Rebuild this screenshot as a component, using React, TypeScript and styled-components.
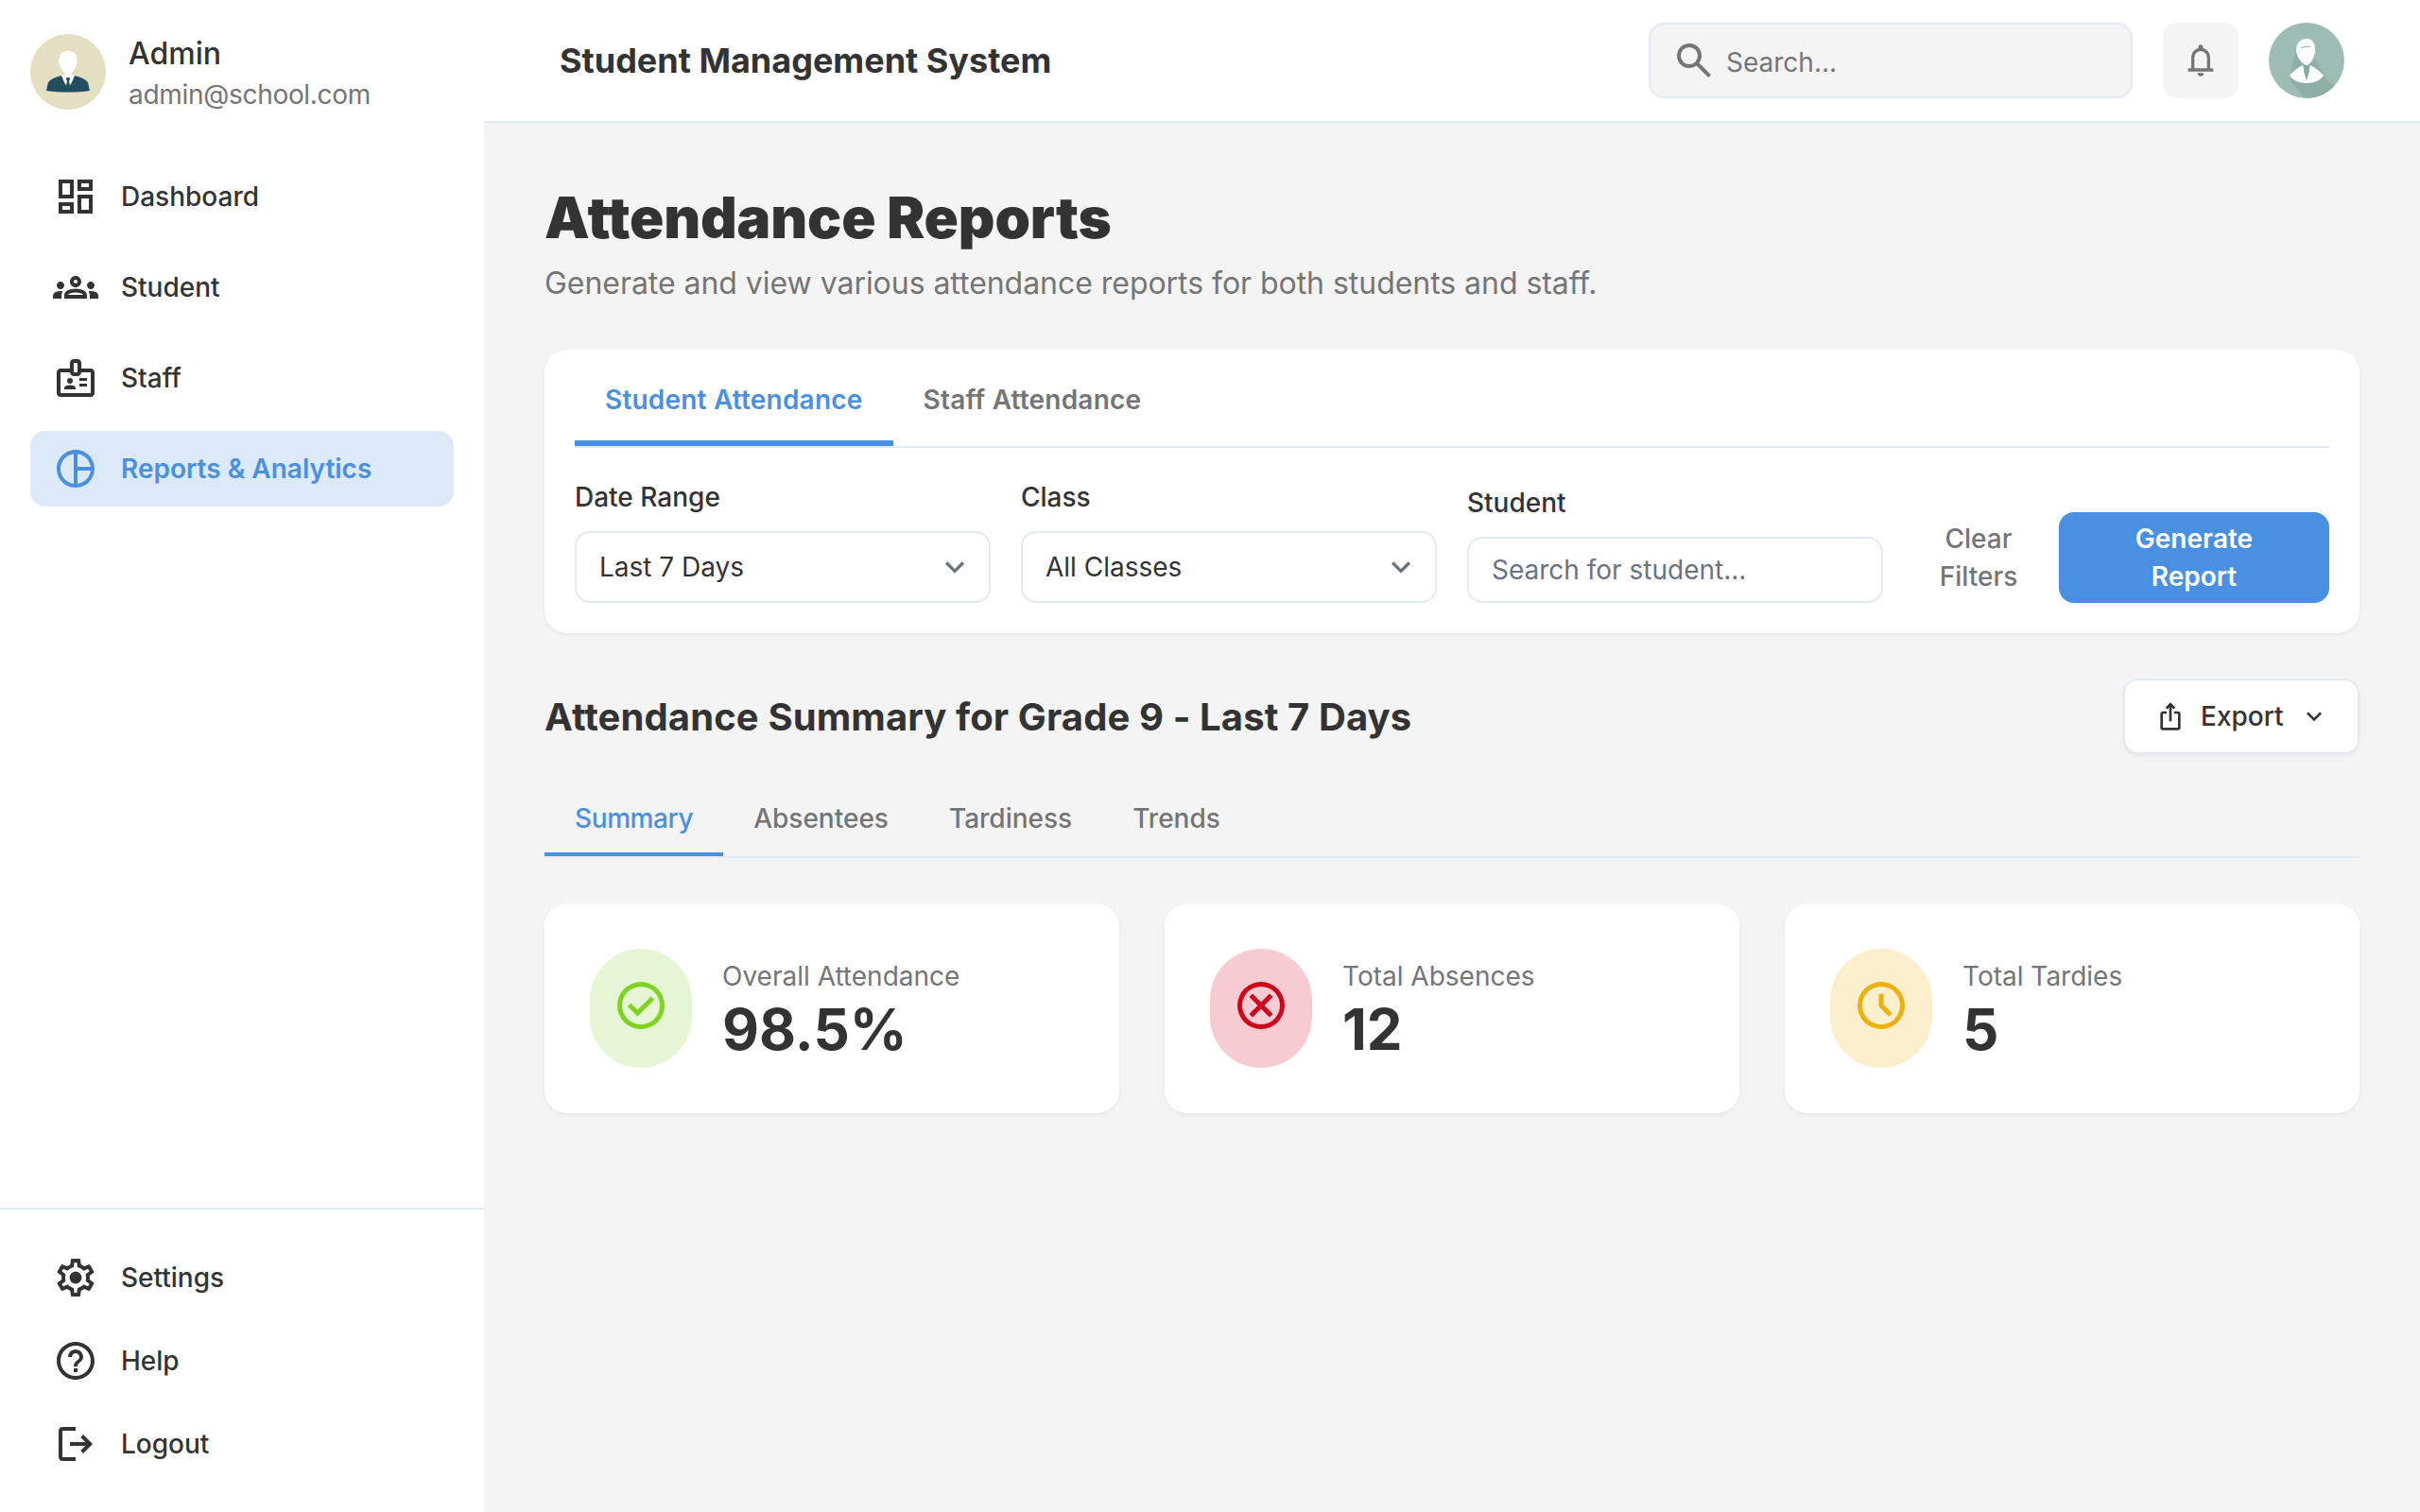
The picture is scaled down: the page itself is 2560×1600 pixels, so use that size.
import { createGlobalStyle, styled } from 'styled-components';
import type { ComponentType } from 'react';
import {
  MdExpandMore,
  MdHelpOutline,
  MdOutlineBadge,
  MdOutlineDashboard,
  MdOutlineGroups,
  MdOutlineIosShare,
  MdOutlinePieChart,
} from 'react-icons/md';

const GlobalStyle = createGlobalStyle`
  * { box-sizing: border-box; }
  html, body { margin: 0; padding: 0; }
  body {
    font-family: Inter, "Noto Sans", sans-serif;
    color: #333333;
    background: #f4f4f4;
  }
`;

const Page = styled.div`
  display: flex;
  width: 2560px;
  height: 1600px;
  overflow: hidden;
`;

const Sidebar = styled.aside`
  width: 512px;
  flex-shrink: 0;
  display: flex;
  flex-direction: column;
  background: #ffffff;
`;

const Profile = styled.div`
  display: flex;
  align-items: center;
  gap: 24px;
  padding: 36px 32px 0;
  height: 116px;
`;

const ProfileText = styled.div`
  display: flex;
  flex-direction: column;
  gap: 5px;
  padding-top: 2px;
`;

const ProfileName = styled.div`
  font-size: 32px;
  line-height: 40px;
  font-weight: 500;
  color: #333333;
`;

const ProfileMail = styled.div`
  font-size: 28px;
  line-height: 36px;
  letter-spacing: -0.3px;
  color: #757575;
`;

const MainNav = styled.nav`
  flex: 1;
  display: flex;
  flex-direction: column;
  gap: 16px;
  padding: 52px 32px 0;
`;

const NavItem = styled.a<{ $active?: boolean }>`
  display: flex;
  align-items: center;
  gap: 24px;
  height: 80px;
  padding: 0 24px;
  border-radius: 16px;
  font-size: 28px;
  font-weight: ${(p) => (p.$active ? 600 : 500)};
  color: ${(p) => (p.$active ? '#4a90e2' : '#333333')};
  background: ${(p) => (p.$active ? 'rgba(74, 144, 226, 0.2)' : 'transparent')};
  svg {
    width: 48px;
    height: 48px;
    flex-shrink: 0;
  }
`;

const BottomNav = styled.nav`
  display: flex;
  flex-direction: column;
  gap: 8px;
  padding: 32px;
  border-top: 2px solid #e5e9f2;
`;

const Content = styled.div`
  flex: 1;
  min-width: 0;
  display: flex;
  flex-direction: column;
`;

const Header = styled.header`
  height: 130px;
  flex-shrink: 0;
  display: flex;
  align-items: center;
  justify-content: space-between;
  padding: 0 80px;
  background: #ffffff;
  border-bottom: 2px solid #e5e9f2;
`;

const AppTitle = styled.h2`
  margin: 0;
  font-size: 36px;
  font-weight: 700;
  color: #333333;
`;

const HeaderTools = styled.div`
  display: flex;
  align-items: center;
  gap: 32px;
`;

const SearchBox = styled.div`
  width: 512px;
  height: 80px;
  display: flex;
  align-items: center;
  gap: 10px;
  padding: 0 24px 0 22px;
  background: #f4f4f4;
  border: 2px solid #e5e9f2;
  border-radius: 16px;
  color: #757575;
  font-size: 28px;
  svg {
    width: 48px;
    height: 48px;
    flex-shrink: 0;
  }
`;

const SearchHint = styled.span`
  padding-top: 3px;
`;

const BellButton = styled.button`
  width: 80px;
  height: 80px;
  display: flex;
  align-items: center;
  justify-content: center;
  padding: 0;
  border: none;
  border-radius: 16px;
  background: #f4f4f4;
  color: #757575;
  svg {
    width: 40px;
    height: 40px;
  }
`;

const Main = styled.main`
  flex: 1;
  display: flex;
  flex-direction: column;
  padding: 64px 64px 0;
`;

const PageTitle = styled.h1`
  margin: 0;
  font-size: 60px;
  line-height: 72px;
  font-weight: 900;
  letter-spacing: -0.14px;
  color: #333333;
`;

const PageSubtitle = styled.p`
  margin: 10px 0 0;
  font-size: 32px;
  line-height: 48px;
  letter-spacing: -0.04px;
  color: #757575;
`;

const FilterCard = styled.section`
  margin-top: 46px;
  padding: 0 32px 32px;
  height: 300px;
  background: #ffffff;
  border-radius: 24px;
  box-shadow: 0 2px 4px rgba(0, 0, 0, 0.05);
`;

const PrimaryTabs = styled.div`
  display: flex;
  height: 104px;
  border-bottom: 2px solid #e5e9f2;
`;

const PrimaryTab = styled.div<{ $active?: boolean }>`
  display: flex;
  align-items: center;
  height: 102px;
  padding: ${(p) => (p.$active ? '9px' : '3px')} 32px 0;
  font-size: 28px;
  font-weight: 600;
  letter-spacing: 0.2px;
  color: ${(p) => (p.$active ? '#4a90e2' : '#757575')};
  border-bottom: ${(p) => (p.$active ? '6px solid #4a90e2' : 'none')};
`;

const FilterRow = styled.div`
  display: flex;
  align-items: flex-end;
  gap: 32px;
  height: 164px;
`;

const Field = styled.div`
  width: 440px;
  display: flex;
  flex-direction: column;
  gap: 16px;
`;

const FieldLabel = styled.label`
  font-size: 28px;
  line-height: 40px;
  font-weight: 500;
  color: #333333;
`;

const SelectBox = styled.div`
  height: 76px;
  display: flex;
  align-items: center;
  justify-content: space-between;
  padding: 0 16px 0 24px;
  border: 2px solid #e5e9f2;
  border-radius: 16px;
  background: #ffffff;
  font-size: 28px;
  color: #333333;
  svg {
    width: 40px;
    height: 40px;
    color: #6b7280;
  }
`;

const StudentInput = styled.div`
  height: 70px;
  display: flex;
  align-items: center;
  padding: 0 24px;
  border: 2px solid #e5e9f2;
  border-radius: 16px;
  background: #ffffff;
  font-size: 28px;
  color: #6b7280;
`;

const FilterActions = styled.div`
  display: flex;
  align-items: center;
  gap: 16px;
  margin-left: auto;
`;

const ClearButton = styled.button`
  width: 108px;
  margin-right: 15px;
  padding: 0;
  border: none;
  background: none;
  font-family: inherit;
  font-size: 28px;
  line-height: 40px;
  font-weight: 500;
  color: #757575;
`;

const GenerateButton = styled.button`
  width: 286px;
  height: 96px;
  padding: 0 40px;
  border: none;
  border-radius: 16px;
  background: #4a90e2;
  font-family: inherit;
  font-size: 28px;
  line-height: 40px;
  font-weight: 600;
  color: #ffffff;
  box-shadow: 0 2px 4px rgba(0, 0, 0, 0.06);
`;

const SummaryHead = styled.div`
  margin-top: 48px;
  display: flex;
  align-items: center;
  justify-content: space-between;
`;

const SummaryTitle = styled.h3`
  margin: 0;
  font-size: 40px;
  font-weight: 700;
  letter-spacing: 0.11px;
  color: #333333;
`;

const ExportButton = styled.button`
  width: 250px;
  height: 80px;
  display: flex;
  align-items: center;
  gap: 16px;
  padding: 0 30px 0 32px;
  border: 2px solid #e5e9f2;
  border-radius: 16px;
  background: #ffffff;
  font-family: inherit;
  font-size: 28px;
  font-weight: 500;
  color: #333333;
  box-shadow: 0 2px 4px rgba(0, 0, 0, 0.05);
  svg {
    width: 32px;
    height: 32px;
    flex-shrink: 0;
  }
`;

const SubTabs = styled.div`
  margin-top: 24px;
  display: flex;
  height: 86px;
  border-bottom: 2px solid #e5e9f2;
`;

const SubTab = styled.div<{ $active?: boolean }>`
  display: flex;
  align-items: center;
  height: 84px;
  padding: ${(p) => (p.$active ? '7px' : '3px')} 32px 0;
  font-size: 28px;
  font-weight: 500;
  letter-spacing: ${(p) => (p.$active ? '-0.4px' : '0')};
  color: ${(p) => (p.$active ? '#4a90e2' : '#757575')};
  border-bottom: ${(p) => (p.$active ? '4px solid #4a90e2' : 'none')};
`;

const StatGrid = styled.div`
  margin-top: 48px;
  display: grid;
  grid-template-columns: repeat(3, 1fr);
  gap: 48px;
`;

const StatCard = styled.div`
  display: flex;
  gap: 32px;
  padding: 48px;
  height: 222px;
  background: #ffffff;
  border-radius: 24px;
  box-shadow: 0 2px 4px rgba(0, 0, 0, 0.05);
`;

const StatIcon = styled.div<{ $bg: string; $fg: string }>`
  width: 108px;
  height: 126px;
  flex-shrink: 0;
  display: flex;
  align-items: center;
  justify-content: center;
  padding-bottom: 6px;
  border-radius: 54px;
  background: ${(p) => p.$bg};
  color: ${(p) => p.$fg};
  svg {
    width: 60px;
    height: 60px;
  }
`;

const StatText = styled.div`
  display: flex;
  flex-direction: column;
  padding-top: 9px;
`;

const StatLabel = styled.div`
  font-size: 28px;
  line-height: 40px;
  color: #757575;
`;

const StatValue = styled.div`
  font-size: 60px;
  line-height: 72px;
  font-weight: 700;
  color: #333333;
`;

const RING =
  'M12 22a10 10 0 1 1 0-20 10 10 0 0 1 0 20Zm0-2a8 8 0 1 0 0-16 8 8 0 0 0 0 16Z';

const symbol = (d: string, extra?: string) => () => (
  <svg viewBox="0 0 24 24" fill="currentColor">
    <path d={d} />
    {extra && <path d={extra} />}
  </svg>
);

const SearchIcon = symbol(
  'm19.6 21-6.3-6.3q-.75.6-1.725.95Q10.6 16 9.5 16q-2.725 0-4.612-1.888Q3 12.225 3 9.5t1.888-4.612Q6.775 3 9.5 3t4.612 1.888Q16 6.775 16 9.5q0 1.1-.35 2.075-.35.975-.95 1.725l6.3 6.3ZM9.5 14q1.875 0 3.188-1.312Q14 11.375 14 9.5q0-1.875-1.312-3.188Q11.375 5 9.5 5 7.625 5 6.312 6.312 5 7.625 5 9.5q0 1.875 1.312 3.188Q7.625 14 9.5 14Z',
);
const BellIcon = symbol(
  'M4 19v-2h2v-7q0-2.075 1.25-3.688Q8.5 4.7 10.5 4.2V3.5q0-.625.438-1.062Q11.375 2 12 2t1.062.438q.438.437.438 1.062v.7q2 .5 3.25 2.112Q18 7.925 18 10v7h2v2Zm8 3q-.825 0-1.412-.587Q10 20.825 10 20h4q0 .825-.587 1.413Q12.825 22 12 22Zm-4-5h8v-7q0-1.65-1.175-2.825Q13.65 6 12 6q-1.65 0-2.825 1.175Q8 8.35 8 10Z',
);
const LogoutIcon = symbol(
  'M5 21q-.825 0-1.413-.587Q3 19.825 3 19V5q0-.825.587-1.413Q4.175 3 5 3h7v2H5v14h7v2Zm11-4-1.375-1.45 2.55-2.55H9v-2h8.175l-2.55-2.55L16 7l5 5Z',
);
const CheckIcon = symbol(RING, 'm10.6 16.6 7.05-7.05-1.4-1.4-5.65 5.65-2.85-2.85-1.4 1.4Z');
const CancelIcon = symbol(RING, 'm8.4 17 3.6-3.6 3.6 3.6 1.4-1.4-3.6-3.6L17 8.4 15.6 7 12 10.6 8.4 7 7 8.4l3.6 3.6L7 15.6Z');
const ClockIcon = symbol(RING, 'm15.3 16.7 1.4-1.4-3.7-3.7V7h-2v5.4Z');

function SettingsIcon() {
  return (
    <svg viewBox="0 0 24 24" fill="currentColor">
      <path d="M19.43 12.98c.04-.32.07-.64.07-.98 0-.34-.03-.66-.07-.98l2.11-1.65c.19-.15.24-.42.12-.64l-2-3.46c-.09-.16-.26-.25-.44-.25-.06 0-.12.01-.17.03l-2.49 1c-.52-.4-1.08-.73-1.69-.98l-.38-2.65C14.46 2.18 14.25 2 14 2h-4c-.25 0-.46.18-.49.42l-.38 2.65c-.61.25-1.17.59-1.69.98l-2.49-1c-.06-.02-.12-.03-.18-.03-.17 0-.34.09-.43.25l-2 3.46c-.13.22-.07.49.12.64l2.11 1.65c-.04.32-.07.65-.07.98 0 .32.03.66.07.98l-2.11 1.65c-.19.15-.24.42-.12.64l2 3.46c.09.16.26.25.44.25.06 0 .12-.01.17-.03l2.49-1c.52.4 1.08.73 1.69.98l.38 2.65c.03.24.24.42.49.42h4c.25 0 .46-.18.49-.42l.38-2.65c.61-.25 1.17-.59 1.69-.98l2.49 1c.06.02.12.03.18.03.17 0 .34-.09.43-.25l2-3.46c.12-.22.07-.49-.12-.64l-2.11-1.65zm-1.98-1.71c.04.31.05.52.05.73 0 .21-.02.43-.05.73l-.14 1.13.89.7 1.08.84-.7 1.21-1.27-.51-1.04-.42-.9.68c-.43.32-.84.56-1.25.73l-1.06.43-.16 1.13-.2 1.35h-1.4l-.19-1.35-.16-1.13-1.06-.43c-.43-.18-.83-.41-1.23-.71l-.91-.7-1.06.43-1.27.51-.7-1.21 1.08-.84.89-.7-.14-1.13c-.03-.31-.05-.54-.05-.74s.02-.43.05-.73l.14-1.13-.89-.7-1.08-.84.7-1.21 1.27.51 1.04.42.9-.68c.43-.32.84-.56 1.25-.73l1.06-.43.16-1.13.2-1.35h1.39l.19 1.35.16 1.13 1.06.43c.43.18.83.41 1.23.71l.91.7 1.06-.43 1.27-.51.7 1.21-1.07.85-.89.7.14 1.13z" />
      <circle cx="12" cy="12" r="3.2" />
    </svg>
  );
}

function AdminAvatar() {
  return (
    <svg width="80" height="80" viewBox="0 0 80 80" style={{ flexShrink: 0 }}>
      <circle cx="40" cy="40" r="40" fill="#e4dec2" />
      <path d="M17 60c1-3 1-8 3-10 3-3 9-5 13-6l7 5 7-5c4 1 10 3 13 6 2 2 2 7 3 10-15 2-31 2-46 0z" fill="#204e5f" />
      <path d="M33 44l6-2h2l6 2-3 7-4 7-4-7z" fill="#ffffff" />
      <path d="M38.5 46h3l.5 2-1 2 1.5 7-2.5 3-2.5-3 1.5-7-1-2z" fill="#204e5f" />
      <path d="M31 31c-1.5-1-1-5 0-5 0-6 4-8 9-8s9 2 9 8c1 0 1.5 4 0 5-1 7-6 12-9 12s-8-5-9-12z" fill="#ffffff" />
    </svg>
  );
}

function HeaderAvatar() {
  return (
    <svg width="80" height="80" viewBox="0 0 80 80">
      <defs>
        <clipPath id="header-avatar-disc">
          <circle cx="40" cy="40" r="40" />
        </clipPath>
      </defs>
      <circle cx="40" cy="40" r="40" fill="#9dbdb4" />
      <path d="M30 24L50 40 60 58 80 80H38L22 60z" fill="#8fafa6" clipPath="url(#header-avatar-disc)" />
      <path d="M22 56c2-3 8-8 14-11l4 16 4-16c6 3 12 8 14 11-3 5-11 8-18 8s-15-3-18-8z" fill="#ffffff" />
      <path d="M37 45h6l-1 5 1 2-3 9-3-9 1-2z" fill="#8aaea4" />
      <path d="M29 29c0-8 5-12 11-12s9 4 9 12c0 7-5 16-9 16s-11-9-11-16z" fill="#ffffff" />
      <path d="M34 27c3-2 7-2 10-1.5" fill="none" stroke="#8aaea4" strokeWidth="1" />
    </svg>
  );
}

type NavEntry = { label: string; icon: ComponentType; active?: boolean };

const mainNav: NavEntry[] = [
  { label: 'Dashboard', icon: MdOutlineDashboard },
  { label: 'Student', icon: MdOutlineGroups },
  { label: 'Staff', icon: MdOutlineBadge },
  { label: 'Reports & Analytics', icon: MdOutlinePieChart, active: true },
];

const bottomNav: NavEntry[] = [
  { label: 'Settings', icon: SettingsIcon },
  { label: 'Help', icon: MdHelpOutline },
  { label: 'Logout', icon: LogoutIcon },
];

const stats = [
  { label: 'Overall Attendance', value: '98.5%', icon: CheckIcon, bg: '#e6f6d5', fg: '#7ed321' },
  { label: 'Total Absences', value: '12', icon: CancelIcon, bg: '#f6ccd2', fg: '#d0021b' },
  { label: 'Total Tardies', value: '5', icon: ClockIcon, bg: '#fbefce', fg: '#edb10e' },
];

export default function App() {
  return (
    <Page>
      <GlobalStyle />
      <Sidebar>
        <Profile>
          <AdminAvatar />
          <ProfileText>
            <ProfileName>Admin</ProfileName>
            <ProfileMail>admin@school.com</ProfileMail>
          </ProfileText>
        </Profile>
        <MainNav>
          {mainNav.map(({ label, icon: Icon, active }) => (
            <NavItem key={label} $active={active}>
              <Icon />
              {label}
            </NavItem>
          ))}
        </MainNav>
        <BottomNav>
          {bottomNav.map(({ label, icon: Icon }) => (
            <NavItem key={label}>
              <Icon />
              {label}
            </NavItem>
          ))}
        </BottomNav>
      </Sidebar>
      <Content>
        <Header>
          <AppTitle>Student Management System</AppTitle>
          <HeaderTools>
            <SearchBox>
              <SearchIcon />
              <SearchHint>Search...</SearchHint>
            </SearchBox>
            <BellButton>
              <BellIcon />
            </BellButton>
            <HeaderAvatar />
          </HeaderTools>
        </Header>
        <Main>
          <PageTitle>Attendance Reports</PageTitle>
          <PageSubtitle>Generate and view various attendance reports for both students and staff.</PageSubtitle>
          <FilterCard>
            <PrimaryTabs>
              <PrimaryTab $active>Student Attendance</PrimaryTab>
              <PrimaryTab>Staff Attendance</PrimaryTab>
            </PrimaryTabs>
            <FilterRow>
              <Field>
                <FieldLabel>Date Range</FieldLabel>
                <SelectBox>
                  Last 7 Days
                  <MdExpandMore />
                </SelectBox>
              </Field>
              <Field>
                <FieldLabel>Class</FieldLabel>
                <SelectBox>
                  All Classes
                  <MdExpandMore />
                </SelectBox>
              </Field>
              <Field>
                <FieldLabel>Student</FieldLabel>
                <StudentInput>Search for student...</StudentInput>
              </Field>
              <FilterActions>
                <ClearButton>Clear Filters</ClearButton>
                <GenerateButton>Generate Report</GenerateButton>
              </FilterActions>
            </FilterRow>
          </FilterCard>
          <SummaryHead>
            <SummaryTitle>Attendance Summary for Grade 9 - Last 7 Days</SummaryTitle>
            <ExportButton>
              <MdOutlineIosShare />
              Export
              <MdExpandMore />
            </ExportButton>
          </SummaryHead>
          <SubTabs>
            <SubTab $active>Summary</SubTab>
            <SubTab>Absentees</SubTab>
            <SubTab>Tardiness</SubTab>
            <SubTab>Trends</SubTab>
          </SubTabs>
          <StatGrid>
            {stats.map(({ label, value, icon: Icon, bg, fg }) => (
              <StatCard key={label}>
                <StatIcon $bg={bg} $fg={fg}>
                  <Icon />
                </StatIcon>
                <StatText>
                  <StatLabel>{label}</StatLabel>
                  <StatValue>{value}</StatValue>
                </StatText>
              </StatCard>
            ))}
          </StatGrid>
        </Main>
      </Content>
    </Page>
  );
}
